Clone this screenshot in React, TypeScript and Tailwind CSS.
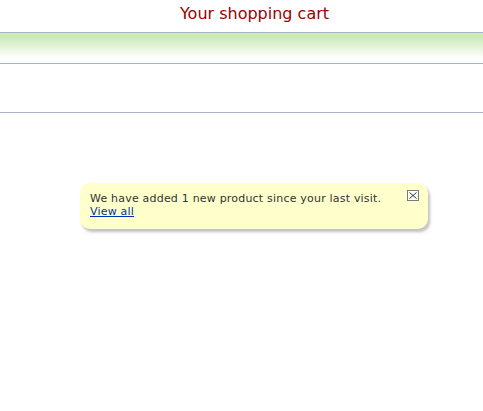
import React from "react";

export default function App() {
  return (
    <div className="w-[483px] h-[411px] bg-white font-['DejaVu_Sans',Verdana,sans-serif] overflow-hidden">
      {/* header */}
      <div className="h-8 flex items-start justify-center pl-[26px] pt-[4px]">
        <h1 className="text-[16px] leading-[19px] text-[#9c0000]">Your shopping cart</h1>
      </div>

      {/* toolbar strip */}
      <div className="h-[32px] border-y border-[#a9b3c6] bg-gradient-to-b from-[#cdeab9] from-15% to-white to-85%" />

      {/* empty row */}
      <div className="h-[49px] border-b border-[#a9b3c6]" />

      {/* notice */}
      <div className="pt-[70px] pl-[80px]">
        <div className="relative w-[348px] h-[46px] rounded-[10px] bg-[#ffffcc] shadow-[2px_3px_3px_rgba(0,0,0,0.25)] pl-[10px] pt-[9px] text-[11px] leading-[13px] tracking-[0.2px] text-[#333333]">
          <p>We have added 1 new product since your last visit.</p>
          <a href="#" className="text-[#0033aa] underline">View all</a>
          <button className="absolute right-[9px] top-[7px] w-[12px] h-[11px] border border-[#7a7a7a] bg-white flex items-center justify-center">
            <svg width="8" height="7" viewBox="0 0 8 7">
              <path d="M0.5 0.5 L7.5 6.5 M7.5 0.5 L0.5 6.5" stroke="#333" strokeWidth="1" />
            </svg>
          </button>
        </div>
      </div>
    </div>
  );
}
